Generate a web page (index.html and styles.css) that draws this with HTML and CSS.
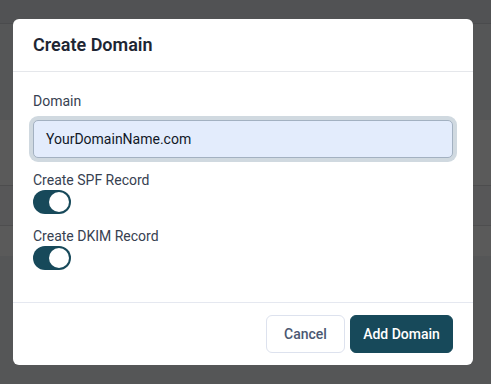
FILE: index.html
```html
<!DOCTYPE html>
<html>
<head>
<meta charset="utf-8">
<link rel="stylesheet" href="styles.css">
</head>
<body>
<div class="page">
  <div class="band b1"></div>
  <div class="band b2"></div>
  <div class="band b3"></div>
  <div class="band b4"></div>
  <div class="band b5"></div>
  <div class="band b6"></div>
</div>
<div class="modal">
  <div class="modal-header">
    <h2 class="title">Create Domain</h2>
  </div>
  <div class="modal-body">
    <label class="label">Domain</label>
    <div class="input">YourDomainName.com</div>
    <label class="label label-gap">Create SPF Record</label>
    <div class="toggle"><span class="knob"></span></div>
    <label class="label label-gap2">Create DKIM Record</label>
    <div class="toggle"><span class="knob"></span></div>
  </div>
  <div class="modal-footer">
    <button class="btn btn-cancel">Cancel</button>
    <button class="btn btn-primary">Add Domain</button>
  </div>
</div>
</body>
</html>
```
FILE: styles.css
```css
* { box-sizing: border-box; }
html, body { margin: 0; padding: 0; }
body {
  width: 491px;
  height: 384px;
  overflow: hidden;
  background: #555657;
  font-family: Roboto, "Liberation Sans", sans-serif;
  position: relative;
}
.page { display: flex; flex-direction: column; }
.band { width: 100%; }
.b1 { height: 24px; background: #515254; border-bottom: 1px solid #4a4b4d; }
.b2 { height: 96px; background: #555657; }
.b3 { height: 66px; background: #5a5a5a; border-bottom: 1px solid #4d4d4e; }
.b4 { height: 40px; background: #575758; border-bottom: 1px solid #4e4e4f; }
.b5 { height: 30px; background: #5a5a5a; }
.b6 { height: 128px; background: #555657; }

.modal {
  position: absolute;
  left: 13px;
  top: 19px;
  width: 460px;
  height: 346px;
  background: #fff;
  border-radius: 6px;
  display: flex;
  flex-direction: column;
}
.modal-header {
  height: 53px;
  border-bottom: 1px solid #e5e7eb;
  padding: 0 20px 2px;
  display: flex;
  align-items: center;
}
.title {
  margin: 0;
  font-size: 18px;
  font-weight: 600;
  color: #1e2633;
}
.modal-body {
  flex: 1;
  padding: 19px 20px 0;
  display: flex;
  flex-direction: column;
  align-items: flex-start;
}
.label {
  display: block;
  font-size: 14px;
  line-height: 20px;
  color: #374151;
}
.input {
  margin-top: 9px;
  width: 420px;
  height: 38px;
  border: 1px solid #a3b1c1;
  border-radius: 5px;
  background: #e3ecfc;
  box-shadow: 0 0 0 4px #d0d9e0;
  padding: 0 12px;
  display: flex;
  align-items: center;
  font-size: 14px;
  color: #111827;
}
.label-gap { margin-top: 12px; }
.label-gap2 { margin-top: 12px; }
.toggle {
  width: 38px;
  height: 24px;
  border-radius: 12px;
  background: #17495a;
  position: relative;
}
.knob {
  position: absolute;
  right: 2.5px;
  top: 2px;
  width: 20px;
  height: 20px;
  border-radius: 50%;
  background: #fff;
}
.modal-footer {
  height: 63px;
  border-top: 1px solid #e5e8f0;
  padding: 0 20px;
  display: flex;
  align-items: center;
  justify-content: flex-end;
  gap: 5px;
}
.btn {
  height: 38px;
  border-radius: 6px;
  font-family: Roboto, "Liberation Sans", sans-serif;
  font-size: 14px;
  font-weight: 500;
  padding: 0;
  cursor: pointer;
}
.btn-cancel {
  width: 79px;
  background: #fff;
  border: 1px solid #dde2ee;
  color: #4b5872;
}
.btn-primary {
  width: 103px;
  background: #17495a;
  border: 1px solid #17495a;
  color: #fff;
}
```
